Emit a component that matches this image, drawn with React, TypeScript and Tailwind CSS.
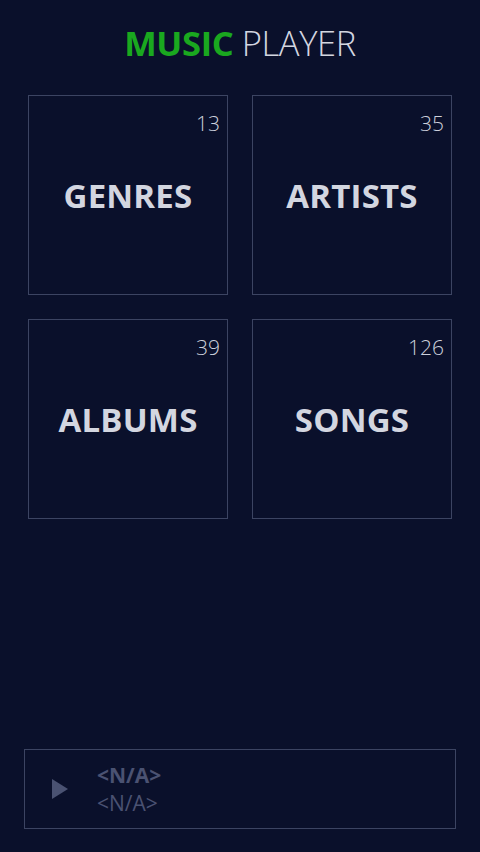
import React from "react";

const sections = [
  { label: "GENRES", count: 13 },
  { label: "ARTISTS", count: 35 },
  { label: "ALBUMS", count: 39 },
  { label: "SONGS", count: 126 },
];

const font = { fontFamily: "'Open Sans', 'Noto Sans', sans-serif" };

export default function App() {
  return (
    <div
      className="w-[480px] h-[852px] bg-[#0a102b] flex flex-col overflow-hidden"
      style={font}
    >
      <h1 className="text-center text-[34.5px] leading-none pt-[26px] tracking-[-0.4px]">
        <span className="font-bold text-[#1aa81f]">MUSIC</span>{" "}
        <span className="font-light text-[#d3d6e0]">PLAYER</span>
      </h1>
      <div className="grid grid-cols-2 gap-6 px-7 mt-[34px]">
        {sections.map((s) => (
          <button
            key={s.label}
            className="relative h-[200px] border border-[#3c4462] flex items-center justify-center"
          >
            <span className="absolute top-[12px] right-[7px] text-[21px] font-light text-[#cdd1dc]">
              {s.count}
            </span>
            <span className="text-[33px] font-bold text-[#d3d6e0] tracking-[0.2px] mt-[2px]">
              {s.label}
            </span>
          </button>
        ))}
      </div>
      <div className="flex-1" />
      <div className="mx-6 mb-[23px] h-[80px] border border-[#3c4462] flex items-center">
        <svg width="16" height="20" viewBox="0 0 16 20" className="ml-[27px]">
          <path d="M0 0 L16 10 L0 20 Z" fill="#4a5272" />
        </svg>
        <div className="ml-[29px] flex flex-col text-[#4a5272] text-[21px] leading-[28px]">
          <span className="font-bold">&lt;N/A&gt;</span>
          <span>&lt;N/A&gt;</span>
        </div>
      </div>
    </div>
  );
}
